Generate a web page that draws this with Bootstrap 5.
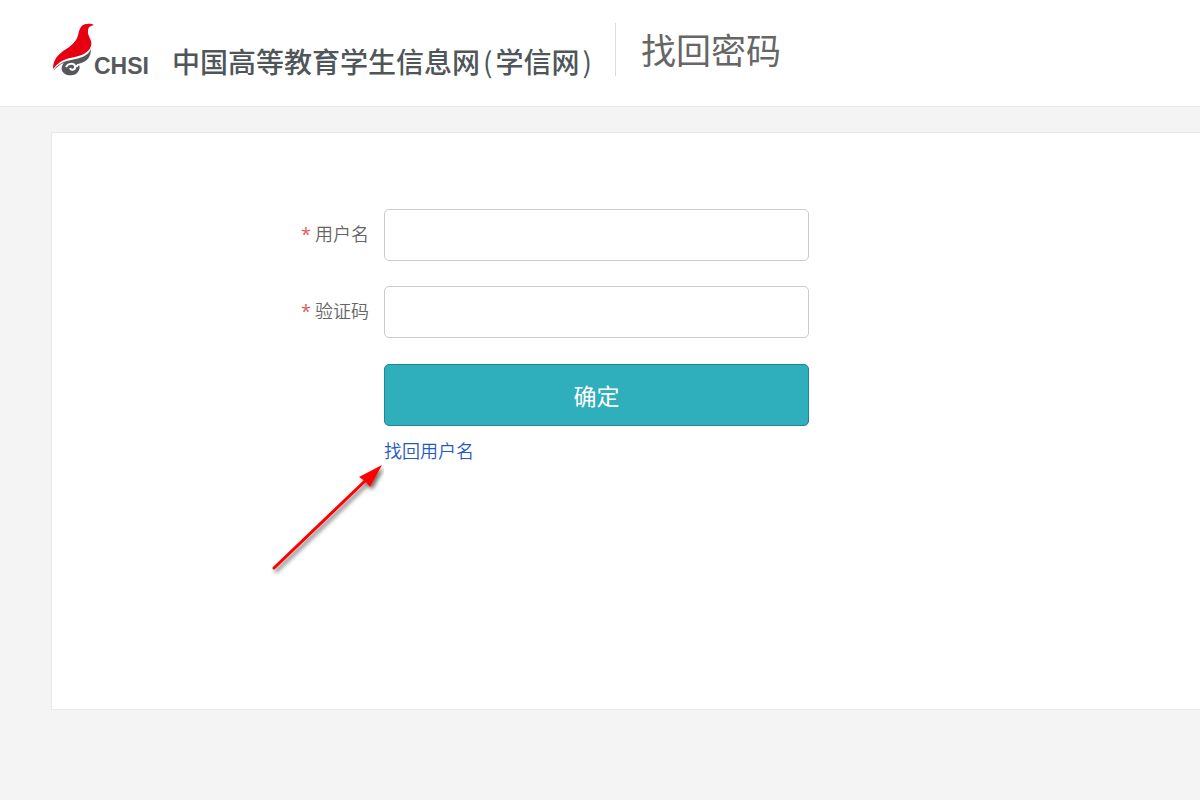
<!DOCTYPE html>
<html lang="zh-CN">
<head>
<meta charset="utf-8">
<meta name="viewport" content="width=device-width, initial-scale=1">
<title>找回密码</title>
<link rel="stylesheet" href="https://cdn.jsdelivr.net/npm/bootstrap@5.3.0/dist/css/bootstrap.min.css">
<style>
  body { background: #f4f4f4; color: #666; font-family: "Noto Sans CJK SC", sans-serif; font-size: 18px; }
  .site-header { background: #fff; border-bottom: 1px solid #e8e8e8; padding: 23px 0 30px 51px; }
  .brand { color: #4f5659; text-decoration: none; height: 53px; }
  .brand-abbr { font: bold 23px/20px "Liberation Sans", sans-serif; color: #55595c; width: 78px; }
  .brand-name { font-size: 28px; line-height: 30px; font-weight: 500; width: 424px; white-space: nowrap; }
  .paren { font-weight: 400; padding: 0 3px; }
  .page-title { font-size: 35px; line-height: 51px; font-weight: 400; border-left: 1px solid #dcdcdc; margin-left: 19px; padding-left: 25px; }
  .panel { background: #fff; border: 1px solid #e9e9e9; border-right: 0; margin: 25px 0 0 51px; padding: 76px 16px 245px 0; }
  .form-line { margin-bottom: 25px; }
  .line-label { width: 332px; padding: 0 15px 3px 0; font-weight: 350; color: #666; line-height: 27px; }
  .line-label span { color: #e05a5a; font-family: "Open Sans", sans-serif; font-weight: 400; }
  .field { width: 425px; }
  .field .form-control { height: 52px; border: 1px solid #ccc; border-radius: 5px; }
  .action-line { padding-top: 1px; }
  .btn-confirm { height: 62px; background: #2faebc; border: 1px solid #23858f; border-radius: 5px; color: #fff; font-size: 23px; }
  .btn-confirm:hover { background: #2899a5; color: #fff; }
  .find-name { color: #1f5bc0; line-height: 27px; margin-top: 11px; font-weight: 350; }
  .arrow { right: 100%; top: 100%; pointer-events: none; }
</style>
</head>
<body>
<header class="site-header d-flex">
  <a class="brand d-flex align-items-end" href="#">
    <svg width="43" height="53" viewBox="0 0 43 53" aria-hidden="true">
      <path fill="#e60012" d="M43 2C40 0 32 0 30 4c-3 4-2 8-5 13-5 7-9 8-14 12C4 34 2 40 2 46c5-6 9-9 17-11 11-2 19-5 21-12 2-6-4-10-3-15 0-4 2-5 6-6z"/>
      <path fill="#55595c" d="M2 48c5-7 9-9 18-11 10-2 17-4 20-11 0 7-3 13-13 15 2 2 2 4 1 6-2 5-7 6-12 5-6-2-7-8-3-12-4 1-7 4-11 8z"/>
      <path fill="none" stroke="#fff" stroke-width="2" d="M15 44c2-4 8-4 9-1 1 4-4 5-5 2M24 43c1 1 3 0 3-2"/>
    </svg>
    <span class="brand-abbr">CHSI</span>
    <span class="brand-name">中国高等教育学生信息网<span class="paren">(</span>学信网<span class="paren">)</span></span>
  </a>
  <h1 class="page-title mb-0">找回密码</h1>
</header>
<main>
  <form class="panel">
    <div class="form-line d-flex align-items-center">
      <label class="line-label text-end" for="user"><span>*</span> 用户名</label>
      <div class="field"><input class="form-control shadow-none" id="user" type="text"></div>
    </div>
    <div class="form-line d-flex align-items-center">
      <label class="line-label text-end" for="code"><span>*</span> 验证码</label>
      <div class="field"><input class="form-control shadow-none" id="code" type="text"></div>
    </div>
    <div class="action-line d-flex">
      <div class="line-label"></div>
      <div class="field">
        <button class="btn btn-confirm w-100" type="submit">确定</button>
        <div class="position-relative d-inline-block find-name">
          <a class="text-decoration-none text-reset" href="#">找回用户名</a>
          <svg class="arrow position-absolute" width="120" height="116" viewBox="0 -1 120 116" aria-hidden="true">
            <defs><filter id="sh" x="-10%" y="-10%" width="130%" height="130%"><feDropShadow dx="2" dy="3" stdDeviation="2" flood-color="#000" flood-opacity=".6"/></filter></defs>
            <g filter="url(#sh)" fill="#f00"><path d="M10 103 101 16" stroke="#f00" stroke-width="3" stroke-linecap="round"/><path d="M118 0 95 12l6 4 5 6z"/></g>
          </svg>
        </div>
      </div>
    </div>
  </form>
</main>
<script src="https://cdn.jsdelivr.net/npm/bootstrap@5.3.0/dist/js/bootstrap.bundle.min.js"></script>
</body>
</html>
